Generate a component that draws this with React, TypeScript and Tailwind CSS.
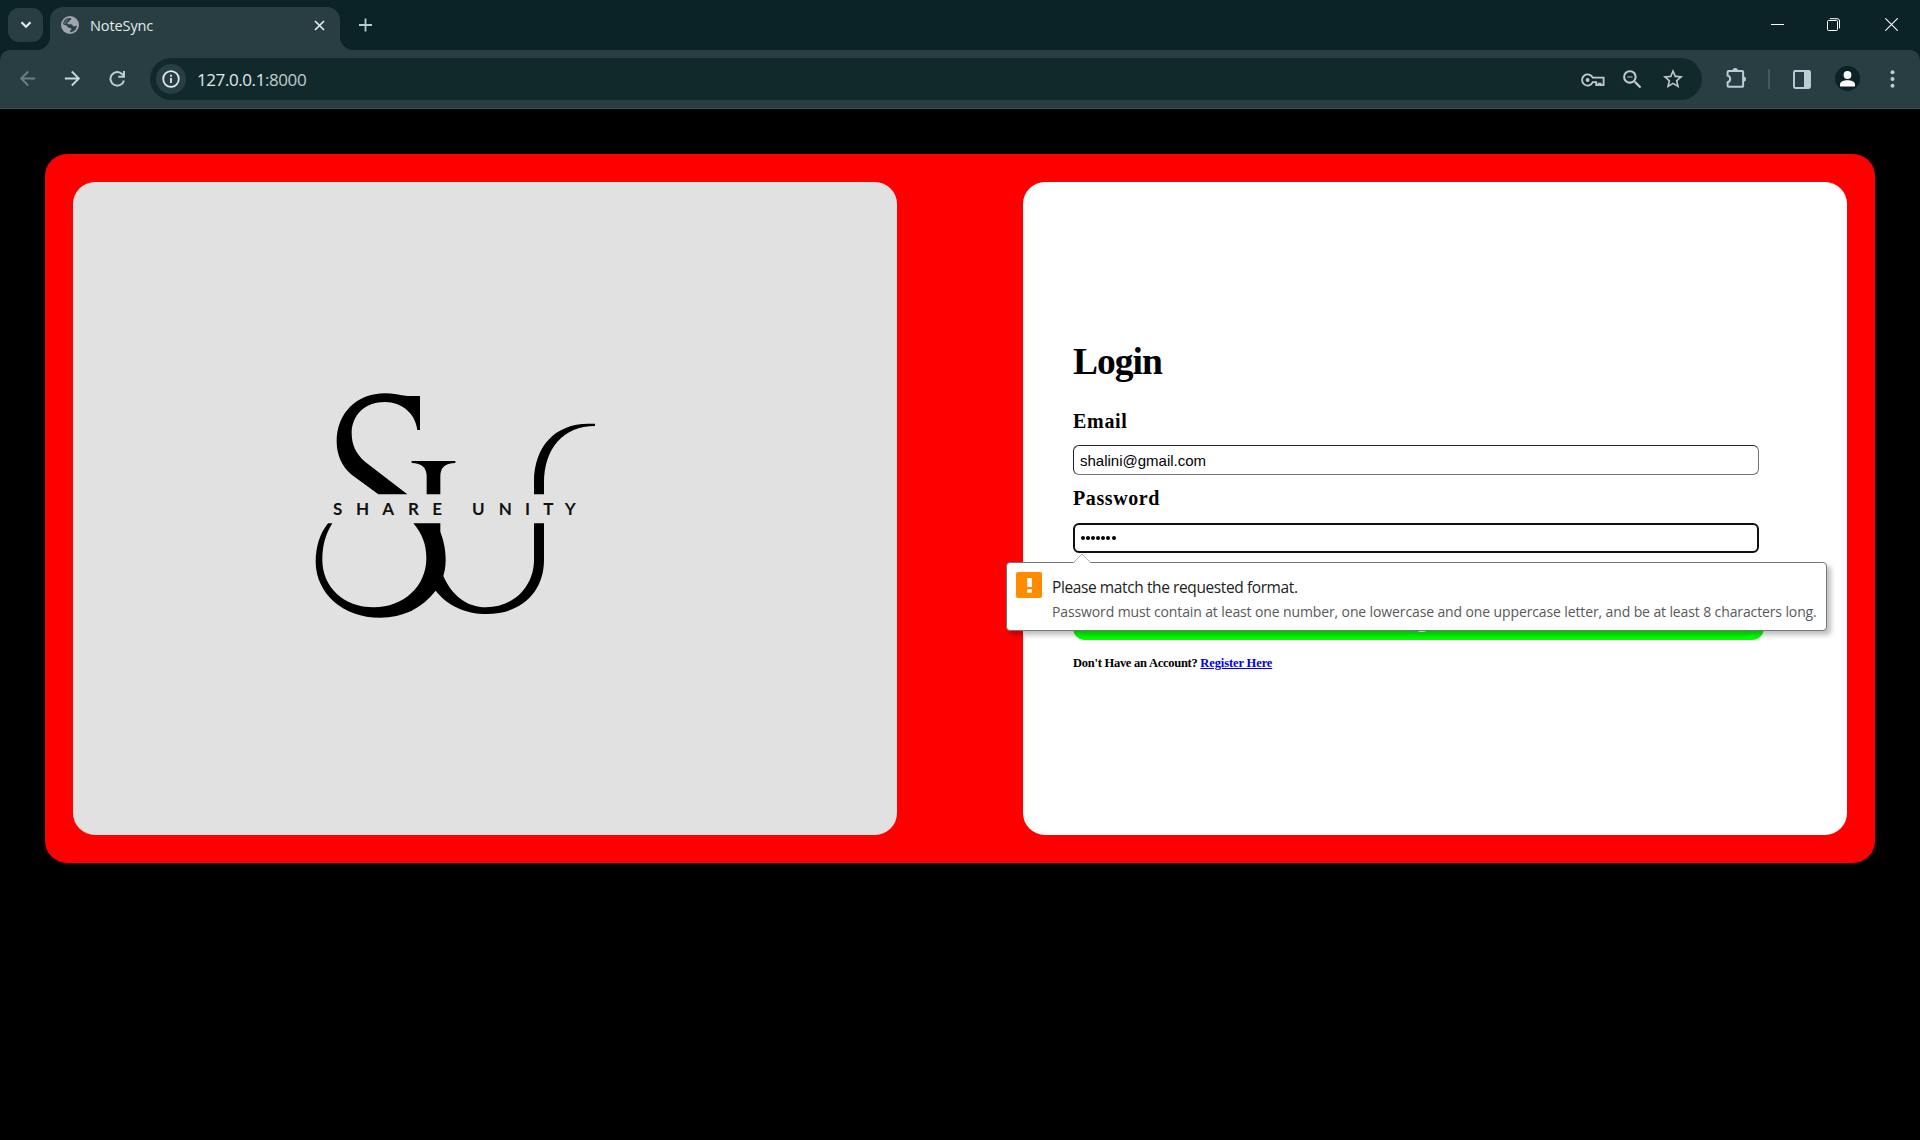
import React from "react";
import {
  MdArrowBack,
  MdArrowForward,
  MdStarOutline,
  MdZoomOut,
} from "react-icons/md";

function TabStrip() {
  return (
    <div className="flex h-[50px] items-start bg-[#0b2226]">
      <div className="ml-2 mt-2 flex h-[34px] w-[35px] items-center justify-center rounded-[11px] bg-[#283e42]">
        <svg width="12" height="8" viewBox="0 0 12 8" fill="none" stroke="#e2eced" strokeWidth="2.2">
          <path d="M1.5 1.2 6 5.7l4.5-4.5" />
        </svg>
      </div>
      <div className="relative ml-[7px] mt-[7px] flex h-[43px] w-[290px] items-start rounded-t-[13px] bg-[#283e42] pt-[9px]">
        <svg className="absolute -left-[13px] bottom-0" width="13" height="13" viewBox="0 0 13 13">
          <path d="M13 0v13H0C7 13 13 7 13 0Z" fill="#283e42" />
        </svg>
        <svg className="absolute -right-[13px] bottom-0" width="13" height="13" viewBox="0 0 13 13">
          <path d="M0 0v13h13C6 13 0 7 0 0Z" fill="#283e42" />
        </svg>
        <svg className="ml-[11px]" width="18" height="18" viewBox="0 0 18 18">
          <circle cx="9" cy="9" r="9" fill="#a0a4ae" />
          <path
            d="M8.6 1.9C11 2 10.4 3.6 9.4 4 8 4.6 8.6 5.6 7.2 6.2 5.8 6.6 6 7.8 7.2 8.2H10.2C11.6 8.4 11.4 10 12.6 10.2H14.2L15.8 9.6C15.8 13.2 13 16.2 9.2 16.3V14.4C11 13.8 10.6 12.4 9.4 12H8C7 11.8 6.6 10.4 5.6 9.8L2 8.2C2.2 4.800 5 1.9 8.6 1.9Z"
            fill="#2c4145"
          />
          <path d="M3.4 5.8 6.4 3.200 8 3.600 5.600 5.800 5 8.200 2.400 8Z" fill="#55666b" />
        </svg>
        <span className="ml-[11px] font-['Open_Sans','Noto_Sans',sans-serif] text-[14.5px] leading-[20px] tracking-[-0.1px] text-[#e2eaeb]">
          NoteSync
        </span>
        <svg className="ml-auto mr-[15px] mt-[4px]" width="11" height="11" viewBox="0 0 11 11" stroke="#e2eced" strokeWidth="1.7">
          <path d="M1 1l9 9M10 1 1 10" />
        </svg>
      </div>
      <svg className="ml-[18px] mt-[18px]" width="15" height="14" viewBox="0 0 15 14" stroke="#b4cdd2" strokeWidth="1.8">
        <path d="M7.5 .5v13M1 7h13" />
      </svg>
      <div className="ml-auto mr-[22px] flex pt-[18px]">
        <svg width="13" height="13" viewBox="0 0 13 13" stroke="#fff">
          <path d="M0 6.5h13" />
        </svg>
        <svg className="ml-[43px]" width="13" height="13" viewBox="0 0 13 13" fill="none" stroke="#fff">
          <rect x=".5" y="2.5" width="10" height="10" rx="1" />
          <path d="M2.8.7H10c1.5 0 2.5.8 2.5 2.3v7.4" />
        </svg>
        <svg className="ml-[45px]" width="13" height="13" viewBox="0 0 13 13" stroke="#fff" strokeWidth="1.1">
          <path d="M.3.3l12.4 12.4M12.7.3.3 12.7" />
        </svg>
      </div>
    </div>
  );
}

function Toolbar() {
  return (
    <div className="bg-[#0b2226]">
      <div className="flex h-[59px] items-start rounded-t-[10px] border-b border-[#3c4f53] bg-[#283e42] pt-[8px]">
        <MdArrowBack className="ml-[16px] mt-[9px] size-[23px] shrink-0 text-[#6b7f83]" />
        <MdArrowForward className="ml-[22px] mt-[9px] size-[23px] shrink-0 text-[#c2dade]" />
        <svg className="ml-[25px] mt-[12px]" width="17" height="18" viewBox="0 0 17 18" fill="none" stroke="#b7d0d5" strokeWidth="2">
          <path d="M14.9 10.4A6.8 6.8 0 1 1 13.3 4.2l1.5 1.5" />
          <path d="M15 .9v5.8H9.3" />
        </svg>
        <div className="ml-[24px] flex h-[42px] w-[1552px] items-center rounded-full bg-[#12292c] pl-[6px] pr-[17px]">
          <div className="flex size-[30px] items-center justify-center rounded-full bg-[#283e42]">
            <svg width="18" height="18" viewBox="0 0 18 18" fill="none" stroke="#e3e9ea" strokeWidth="1.8">
              <circle cx="9" cy="9" r="7.8" />
              <path d="M9 8v5M9 4.8v1.9" />
            </svg>
          </div>
          <span className="ml-[11px] mt-[2px] font-['Open_Sans','Noto_Sans',sans-serif] text-[17px] leading-6 tracking-[-0.42px] text-[#e3e9ea]">
            127.0.0.1<span className="text-[#c3cccd]">:8000</span>
          </span>
          <svg className="ml-auto mt-[1px]" width="24" height="14" viewBox="0 0 24 14" fill="none" stroke="#c4cacb" strokeWidth="1.8">
            <path d="M11.8 4.7A5.6 5.6 0 1 0 11.8 9.2H15.2V12.2H17.6V10.6H19.6V12.2H22.6V4.7Z" />
            <circle cx="6.6" cy="7" r="1.9" fill="#c4cacb" stroke="none" />
          </svg>
          <MdZoomOut className="ml-[15px] size-[25px] text-[#c4cacb]" />
          <MdStarOutline className="ml-[16px] size-[24px] text-[#c4cacb]" />
        </div>
        <svg className="ml-[23px] mt-[10px]" width="22" height="22" viewBox="0 0 22 22">
          <path
            d="M3.6 3.1H17.2a.9.9 0 0 1 .9.9V17.9a.9.9 0 0 1-.9.9H3.6a1 1 0 0 1-1-1V14.2A3.4 3.4 0 0 0 2.6 7.6V4.1a1 1 0 0 1 1-1Z"
            fill="none"
            stroke="#b7d0d5"
            strokeWidth="2"
          />
          <path d="M7.5 2.8a2.7 2.7 0 0 1 5.4 0ZM18.3 8.4a2.7 2.7 0 0 1 0 5.4Z" fill="#b7d0d5" />
        </svg>
        <div className="ml-[21px] mt-[11px] h-[20px] w-[2px] bg-[#405a5f]" />
        <svg className="ml-[23px] mt-[12px]" width="18" height="19" viewBox="0 0 18 19">
          <rect x="1" y="1" width="16" height="17" rx="1.2" fill="none" stroke="#b7d0d5" strokeWidth="1.9" />
          <path d="M11 1h6v17h-6Z" fill="#b7d0d5" />
        </svg>
        <div className="ml-[24px] mt-[8px] flex size-[25px] items-center justify-center rounded-full bg-[#0b2226]">
          <svg width="15" height="16" viewBox="0 0 15 16" fill="#fff">
            <circle cx="7.5" cy="4" r="3.9" />
            <path d="M0 15.5V13.5C0 10.5 4 9.3 7.5 9.3S15 10.5 15 13.5V15.5Z" />
          </svg>
        </div>
        <svg className="ml-[30px] mt-[12px]" width="5" height="18" viewBox="0 0 5 18" fill="#b7d0d5">
          <circle cx="2.5" cy="2.2" r="2" />
          <circle cx="2.5" cy="9" r="2" />
          <circle cx="2.5" cy="15.8" r="2" />
        </svg>
      </div>
    </div>
  );
}

function Logo() {
  return (
    <svg width="310" height="250" viewBox="0 0 930 750">
      <path d="M360 48V150H352C346 100 305 66 255 66C195 66 155 105 155 160C155 195 168 222 195 245L322 343H235L155 284C125 260 110 222 110 185C110 100 170 40 255 40C280 40 300 46 322 48Z" />
      <path d="M335 243H466V249C435 250 421 262 421 290V343H380V290C380 262 365 250 335 249Z" />
      <path d="M702 343V305C702 200 765 131 865 131H885V138C790 138 732 205 732 310V343Z" />
      <path d="M84 430H97C75 465 67 500 67 540C67 620 130 682 222 682C310 682 379 620 379 535C379 490 365 460 340 430H421V455C430 480 437 505 437 540C437 560 434 575 430 588C455 645 500 682 558 682C640 682 702 620 702 540V430H732V540C732 635 665 702 560 702C495 702 440 675 407 632C365 685 310 713 240 713C130 713 47 640 47 545C47 500 60 460 84 430Z" />
      <text
        className="font-['Lato',sans-serif] text-[51px] font-bold"
        x="99 168 247 324 397 516 596 675 730 794"
        y="405"
        fill="#111"
      >
        SHAREUNITY
      </text>
    </svg>
  );
}

function ValidationBubble() {
  return (
    <div className="absolute -left-[17px] top-[380px] flex h-[69px] w-[821px] rounded-[4px] border border-[#767676] bg-white pl-[9px] pt-[9px] font-normal shadow-[4px_4px_5px_rgba(0,0,0,0.25)]">
      <svg className="absolute left-[65px] -top-[10px]" width="20" height="11" viewBox="0 0 20 11">
        <path d="M1 11 10 1.5 19 11Z" fill="#fff" />
        <path d="M1 10 10 1 19 10" fill="none" stroke="#b0b0b0" />
      </svg>
      <div className="flex size-[26px] shrink-0 items-center justify-center rounded-[2px] bg-[#ff8c00]">
        <svg width="5" height="15" viewBox="0 0 5 15" fill="#fff">
          <path d="M.2 0h4.6v9H.2ZM.2 11.2h4.6v3.6H.2Z" />
        </svg>
      </div>
      <div className="ml-[10px] whitespace-nowrap font-['Open_Sans','Noto_Sans',sans-serif]">
        <div className="mt-[4px] text-[15.5px] leading-[22px] tracking-[-0.4px] text-[#222]">
          Please match the requested format.
        </div>
        <div className="mt-[4px] text-[14px] leading-[20px] tracking-[-0.12px] text-[#595959]">
          Password must contain at least one number, one lowercase and one uppercase letter, and be at least 8 characters long.
        </div>
      </div>
    </div>
  );
}

function LoginPanel() {
  return (
    <div className="relative h-[653px] w-[824px] rounded-[22px] bg-white pl-[50px] pt-[160px] font-['Liberation_Serif',serif] font-bold text-black">
      <h1 className="text-[37.5px] leading-[40px] tracking-[-1px]">Login</h1>
      <div className="mt-[27px] text-[20px] leading-[24px] tracking-[0.7px]">Email</div>
      <div className="mt-[12px] h-[30px] w-[686px] rounded-[6px] border border-[#767676] border-l-[#222] border-t-[#222] pl-[6px] font-['Liberation_Sans',sans-serif] text-[15px] font-normal leading-[30px]">
        shalini@gmail.com
      </div>
      <div className="mt-[11px] text-[20px] leading-[24px] tracking-[0.6px]">Password</div>
      <div className="mt-[13px] flex h-[30px] w-[686px] items-center gap-[1.2px] rounded-[6px] border-2 border-[#101010] pl-[5.5px]">
        {Array.from({ length: 7 }, (_, i) => (
          <span key={i} className="size-[4px] rounded-full bg-black" />
        ))}
      </div>
      <div className="mt-[43px] h-[44px] w-[691px] rounded-[12px] bg-[#00ff00] text-center text-[22px] leading-[47px] text-white">
        Login
      </div>
      <div className="mt-[15px] whitespace-nowrap text-[12.5px] leading-[16px] tracking-[-0.26px]">
        Don't Have an Account? <span className="tracking-[-0.12px] text-[#0000ee] underline">Register Here</span>
      </div>
      <ValidationBubble />
    </div>
  );
}

export default function App() {
  return (
    <div className="h-[1140px] w-[1920px] overflow-hidden bg-black">
      <TabStrip />
      <Toolbar />
      <div className="mx-[45px] mt-[45px] flex h-[709px] justify-between rounded-[22px] bg-[#ff0000] p-[28px]">
        <div className="h-[653px] w-[824px] rounded-[22px] bg-[#e1e1e1] pl-[227px] pt-[198px]">
          <Logo />
        </div>
        <LoginPanel />
      </div>
    </div>
  );
}
